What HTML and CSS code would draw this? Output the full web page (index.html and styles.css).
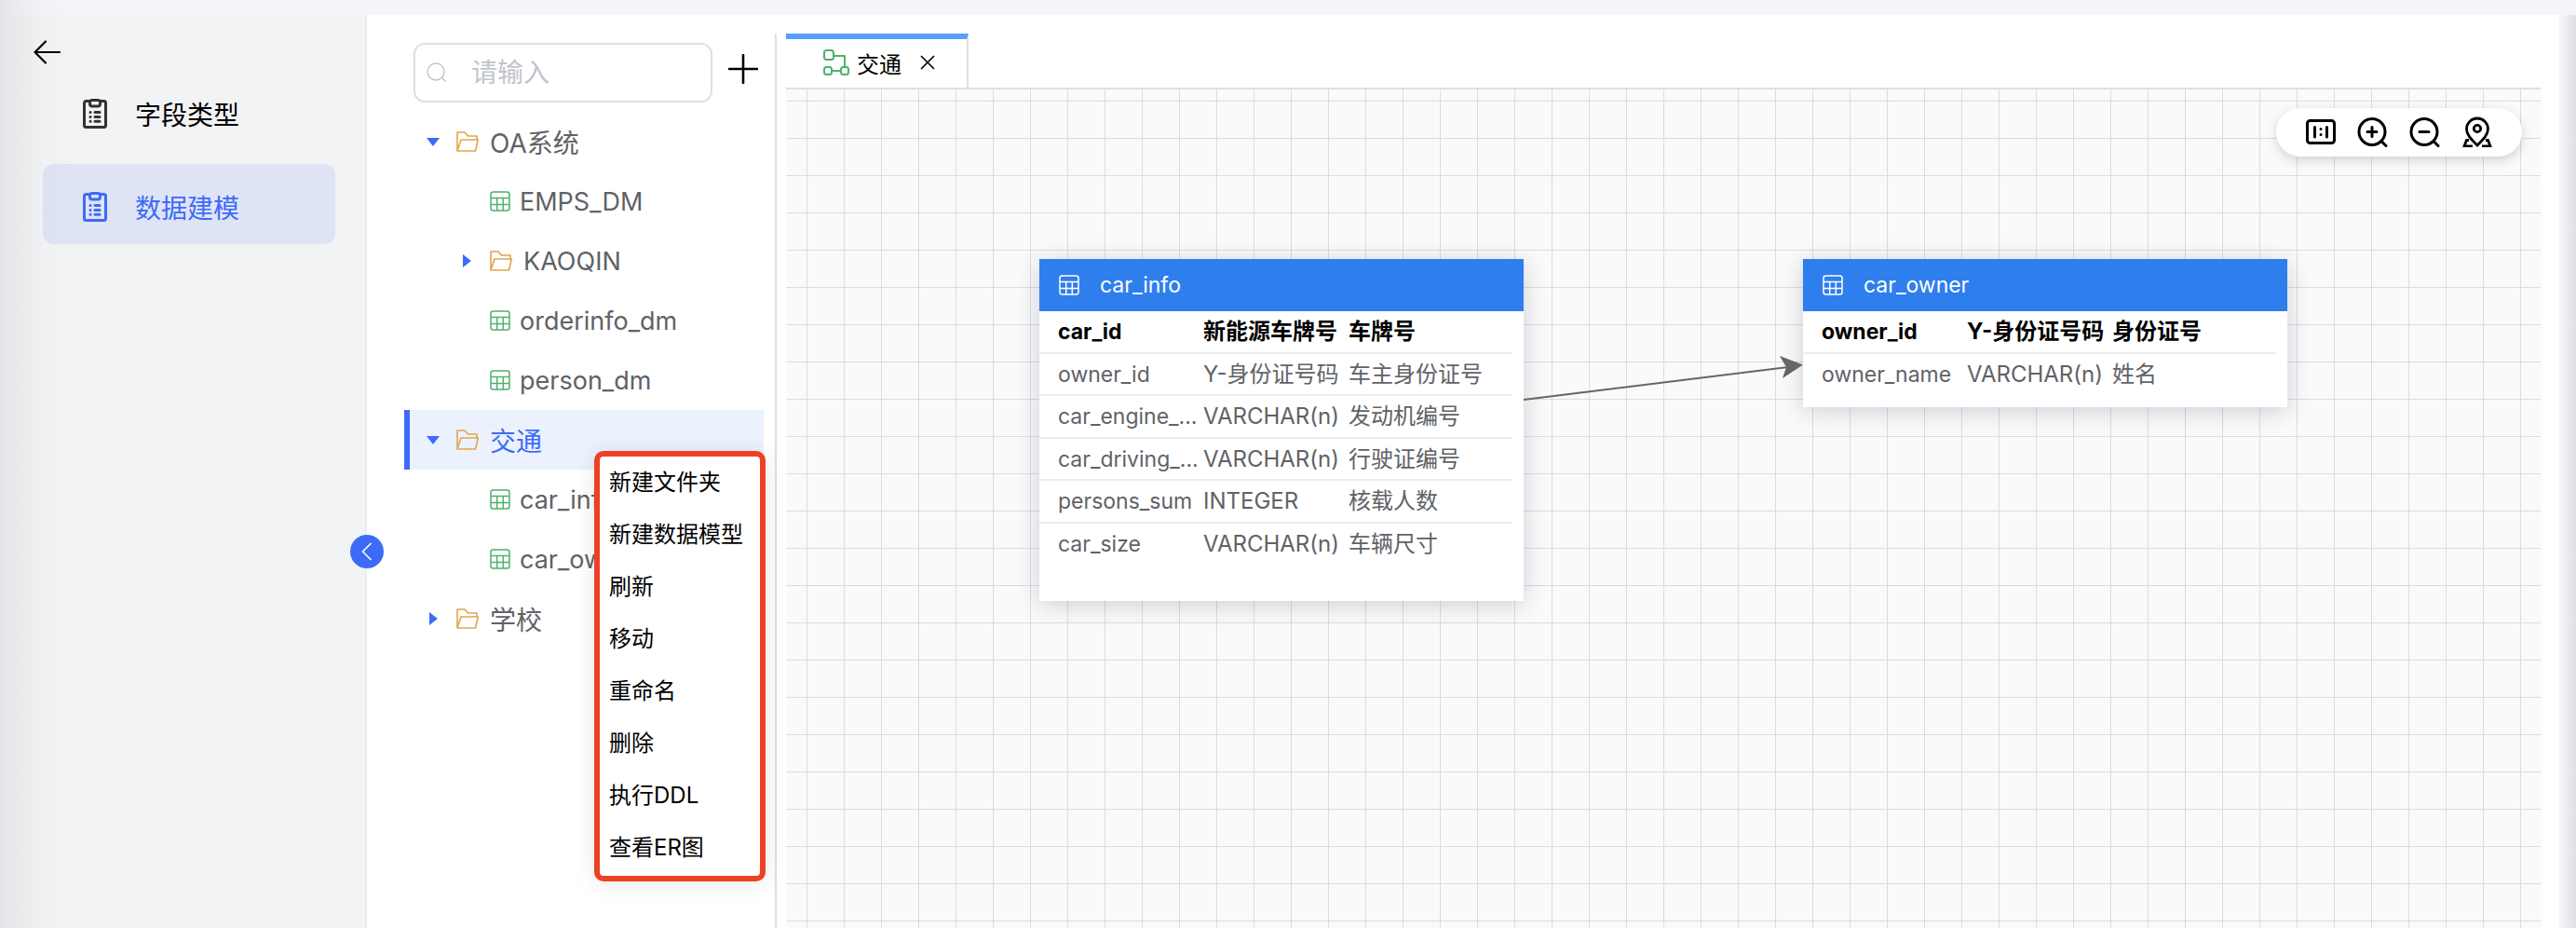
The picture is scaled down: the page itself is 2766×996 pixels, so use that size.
FILE: index.html
```html
<!DOCTYPE html>
<html lang="zh-CN">
<head>
<meta charset="utf-8">
<meta name="viewport" content="width=device-width, initial-scale=1">
<title>数据建模</title>
<link rel="stylesheet" href="styles.css">
</head>
<body>
<svg class="sprite" aria-hidden="true">
  <symbol id="i-clipboard" viewBox="0 0 26 32">
    <path d="M7 2.500H3.500a2 2 0 0 0-2 2V28.500a2 2 0 0 0 2 2h19a2 2 0 0 0 2-2V4.500a2 2 0 0 0-2-2H19" fill="none" stroke="currentColor" stroke-width="3"/>
    <rect x="7.500" y="1.500" width="11" height="6.500" rx="2.500" fill="none" stroke="currentColor" stroke-width="3"/>
    <path d="M8 14.500h.1M8 19.500h.1M8 24.300h.1M13 14.500h5M13 19.500h5M13 24.300h5" fill="none" stroke="currentColor" stroke-width="3" stroke-linecap="round"/>
  </symbol>
  <symbol id="i-folder" viewBox="0 0 24 22">
    <path d="M1 21V1h8l3.500 4H22v4M1 21L5 9h18.300L20.500 21z" fill="none" stroke="currentColor" stroke-width="1.600" stroke-linejoin="round"/>
  </symbol>
  <symbol id="i-table" viewBox="0 0 22 22">
    <rect x="1" y="1" width="20" height="20" rx="2.500" fill="none" stroke="currentColor" stroke-width="1.500"/>
    <path d="M1 7.500h20M1 14.500h20M7.700 7.500V21M14.300 7.500V21" fill="none" stroke="currentColor" stroke-width="1.500"/>
  </symbol>
</svg>

<div class="app">
  <aside class="sidebar">
    <button class="back" type="button" aria-label="返回">
      <svg width="30" height="26" viewBox="0 0 30 26"><path d="M28 13H2M13 1.500L1.500 13l11.500 11.500" fill="none" stroke="currentColor" stroke-width="2.200" stroke-linecap="round" stroke-linejoin="round"/></svg>
    </button>
    <nav class="side-nav">
      <a class="side-link" href="#types"><svg class="side-icon"><use href="#i-clipboard"/></svg><span>字段类型</span></a>
      <a class="side-link side-link-active" href="#model" aria-current="page"><svg class="side-icon"><use href="#i-clipboard"/></svg><span>数据建模</span></a>
    </nav>
    <button class="collapse" type="button" aria-label="收起">
      <svg width="12" height="20" viewBox="0 0 12 20"><path d="M10.500 1L1.500 10l9 9" fill="none" stroke="currentColor" stroke-width="1.600"/></svg>
    </button>
  </aside>

  <section class="explorer">
    <div class="search-row">
      <label class="search">
        <svg width="22" height="22" viewBox="0 0 22 22" aria-hidden="true"><circle cx="10" cy="10" r="9" fill="none" stroke="currentColor" stroke-width="1.400"/><path d="M16.500 16.500L20.500 20.500" stroke="currentColor" stroke-width="1.400"/></svg>
        <input class="search-input" type="text" placeholder="请输入" aria-label="搜索">
      </label>
      <button class="add" type="button" aria-label="新增">
        <svg width="32" height="32" viewBox="0 0 32 32"><path d="M16 1v30M1 16h30" stroke="currentColor" stroke-width="2.600" stroke-linecap="round"/></svg>
      </button>
    </div>
    <div class="tree">
      <button class="node" type="button"><span class="caret caret-open"></span><svg class="folder"><use href="#i-folder"/></svg><span>OA系统</span></button>
      <button class="node leaf" type="button"><svg class="sheet"><use href="#i-table"/></svg><span>EMPS_DM</span></button>
      <button class="node sub" type="button"><span class="caret"></span><svg class="folder"><use href="#i-folder"/></svg><span>KAOQIN</span></button>
      <button class="node leaf" type="button"><svg class="sheet"><use href="#i-table"/></svg><span>orderinfo_dm</span></button>
      <button class="node leaf" type="button"><svg class="sheet"><use href="#i-table"/></svg><span>person_dm</span></button>
      <button class="node node-active" type="button"><span class="caret caret-open"></span><svg class="folder"><use href="#i-folder"/></svg><span>交通</span></button>
      <button class="node leaf" type="button"><svg class="sheet"><use href="#i-table"/></svg><span>car_info</span></button>
      <button class="node leaf" type="button"><svg class="sheet"><use href="#i-table"/></svg><span>car_owner</span></button>
      <button class="node" type="button"><span class="caret"></span><svg class="folder"><use href="#i-folder"/></svg><span>学校</span></button>
    </div>
    <div class="menu" role="menu">
      <button class="menu-item" type="button" role="menuitem">新建文件夹</button>
      <button class="menu-item" type="button" role="menuitem">新建数据模型</button>
      <button class="menu-item" type="button" role="menuitem">刷新</button>
      <button class="menu-item" type="button" role="menuitem">移动</button>
      <button class="menu-item" type="button" role="menuitem">重命名</button>
      <button class="menu-item" type="button" role="menuitem">删除</button>
      <button class="menu-item" type="button" role="menuitem">执行DDL</button>
      <button class="menu-item" type="button" role="menuitem">查看ER图</button>
    </div>
  </section>

  <main class="workspace">
    <div class="tabs">
      <div class="tab">
        <svg width="28" height="28" viewBox="0 0 28 28" aria-hidden="true"><g fill="none" stroke="#4fb06d" stroke-width="2"><rect x="1" y="1" width="10" height="10" rx="2.500"/><rect x="1" y="19" width="8" height="8" rx="2.500"/><rect x="19" y="19" width="8" height="8" rx="2.500"/><path d="M11 7h12v12M9 23h10"/></g></svg>
        <span class="tab-name">交通</span>
        <button class="tab-close" type="button" aria-label="关闭"><svg width="16" height="16" viewBox="0 0 16 16"><path d="M1 1l14 14M15 1L1 15" stroke="currentColor" stroke-width="1.600"/></svg></button>
      </div>
    </div>
    <div class="canvas">
      <div class="tools">
        <button class="tool" type="button" aria-label="原始比例"><svg width="34" height="34" viewBox="0 0 34 34"><rect x="2.500" y="5.500" width="29" height="24" rx="3" fill="none" stroke="currentColor" stroke-width="3"/><path d="M10.500 12.500v10.500M23.500 12.500v10.500M17 14.500v.1M17 20.500v.1" stroke="currentColor" stroke-width="3" stroke-linecap="round"/></svg></button>
        <button class="tool" type="button" aria-label="放大"><svg width="34" height="34" viewBox="0 0 34 34"><g fill="none" stroke="currentColor" stroke-width="3" stroke-linecap="round"><circle cx="16" cy="17.500" r="14"/><path d="M26 27.500l5 5M16 12.500v10M11 17.500h10"/></g></svg></button>
        <button class="tool" type="button" aria-label="缩小"><svg width="34" height="34" viewBox="0 0 34 34"><g fill="none" stroke="currentColor" stroke-width="3" stroke-linecap="round"><circle cx="16" cy="17.500" r="14"/><path d="M26 27.500l5 5M11 17.500h10"/></g></svg></button>
        <button class="tool" type="button" aria-label="定位"><svg width="34" height="34" viewBox="0 0 34 34"><g fill="none" stroke="currentColor" stroke-width="2.800"><path d="M17 32C10 25 5.500 20.500 5.500 14.500a11.500 11.500 0 0 1 23 0C28.500 20.500 24 25 17 32z"/><circle cx="17" cy="14" r="3.700"/><path d="M8 26.500H5.500L3 33h9M26 26.500h2.500L31 33h-9"/></g></svg></button>
      </div>
      <svg class="edge" viewBox="0 0 300 60" aria-hidden="true"><path d="M0 45L284 10" stroke="#666" stroke-width="2"/><path d="M275 -2L300 7.500 278 22 282 10z" fill="#666"/></svg>
      <article class="entity entity-info">
        <h2 class="entity-head"><svg class="sheet"><use href="#i-table"/></svg><span>car_info</span></h2>
        <table class="fields">
          <tr class="key"><td>car_id</td><td>新能源车牌号</td><td>车牌号</td></tr>
          <tr><td>owner_id</td><td>Y-身份证号码</td><td>车主身份证号</td></tr>
          <tr><td>car_engine_...</td><td>VARCHAR(n)</td><td>发动机编号</td></tr>
          <tr><td>car_driving_...</td><td>VARCHAR(n)</td><td>行驶证编号</td></tr>
          <tr><td>persons_sum</td><td>INTEGER</td><td>核载人数</td></tr>
          <tr><td>car_size</td><td>VARCHAR(n)</td><td>车辆尺寸</td></tr>
        </table>
      </article>
      <article class="entity entity-owner">
        <h2 class="entity-head"><svg class="sheet"><use href="#i-table"/></svg><span>car_owner</span></h2>
        <table class="fields">
          <tr class="key"><td>owner_id</td><td>Y-身份证号码</td><td>身份证号</td></tr>
          <tr><td>owner_name</td><td>VARCHAR(n)</td><td>姓名</td></tr>
        </table>
      </article>
    </div>
  </main>
</div>
</body>
</html>
```

FILE: styles.css
```css
* { box-sizing: border-box; }

body {
  margin: 0;
  height: 100vh;
  overflow: hidden;
  background: #f5f4fb;
  color: #000;
  font-family: Inter, "Noto Sans CJK SC", sans-serif;
  font-size: 28px;
}

button, input { font: inherit; color: inherit; }

button {
  border: 0;
  padding: 0;
  background: none;
  cursor: pointer;
}

svg { display: block; flex: none; }
.sprite { position: absolute; width: 0; height: 0; }

.app {
  position: relative;
  display: flex;
  height: 100vh;
  padding: 16px 18px 0 14px;
}

/* soft shade along both window edges */
.app::before,
.app::after {
  content: "";
  position: absolute;
  z-index: 1;
  top: 0;
  bottom: 0;
  pointer-events: none;
}
.app::before {
  left: 0;
  width: 84px;
  background: linear-gradient(90deg, rgba(0, 0, 0, .07), rgba(0, 0, 0, .045) 18%, rgba(0, 0, 0, .012) 50%, rgba(0, 0, 0, 0));
}
.app::after {
  top: 16px;
  right: 0;
  width: 16px;
  background: linear-gradient(270deg, rgba(0, 0, 0, .09), rgba(0, 0, 0, 0));
}

.sidebar {
  position: relative;
  flex: none;
  width: 380px;
  padding: 24px 32px 0;
  border-right: 2px solid #ebebf0;
  background: #f1f3f5;
}
.back { display: flex; align-items: center; height: 32px; margin-left: -10px; }
.side-nav { display: grid; gap: 14px; padding-top: 4px; }
.side-link {
  display: flex;
  align-items: center;
  gap: 30px;
  height: 86px;
  padding: 6px 43px 0;
  border-radius: 12px;
  color: #000;
  text-decoration: none;
}
.side-icon { width: 26px; height: 32px; color: #333; }
.side-link-active { background: #dfe4f5; color: #3d6bf8; }
.side-link-active .side-icon { color: #3d6bf8; }
.collapse {
  position: absolute;
  z-index: 2;
  top: 558px;
  right: -20px;
  display: grid;
  place-items: center;
  width: 36px;
  height: 36px;
  border-radius: 50%;
  background: #3d6bf8;
  color: #fff;
}

.explorer {
  position: relative;
  flex: none;
  width: 440px;
  margin-top: 20px;
  padding-top: 10px;
  border-right: 2px solid #dfdfdf;
  background: #fff;
  box-shadow: 0 -20px #fff;
}
.search-row { display: flex; align-items: flex-start; gap: 17px; padding-left: 50px; }
.search {
  display: flex;
  align-items: center;
  gap: 26px;
  width: 321px;
  height: 64px;
  padding: 0 12px;
  border: 2px solid #dfdfdf;
  border-radius: 12px;
  color: #c0c4cc;
}
.search-input {
  flex: 1;
  min-width: 0;
  border: 0;
  padding: 0;
  background: none;
  color: #606266;
  outline: 0;
}
.search-input::placeholder { color: #c0c4cc; opacity: 1; }
.add { padding-top: 12px; }

.tree { display: grid; padding: 10px 12px 0 40px; }
.node {
  display: flex;
  align-items: center;
  height: 64px;
  padding-left: 16px;
  border-left: 6px solid transparent;
  color: #606266;
  text-align: left;
  white-space: nowrap;
}
.node-active { background: #ebf2fe; border-left-color: #3d6bf8; color: #3d6bf8; }
.sub { padding-left: 52px; font-size: 27px; }
.leaf { padding-left: 86px; gap: 10px; font-size: 27px; }
.caret { display: grid; width: 18px; margin-right: 16px; }
.caret::before {
  content: "";
  justify-self: center;
  border-left: 9px solid #3d6bf8;
  border-top: 7px solid transparent;
  border-bottom: 7px solid transparent;
}
.caret-open::before {
  border-top: 9px solid #3d6bf8;
  border-bottom: 0;
  border-left: 7px solid transparent;
  border-right: 7px solid transparent;
}
.folder { width: 24px; height: 22px; margin-right: 12px; color: #e2a54c; }
.sheet { width: 22px; height: 22px; color: #4fb06d; }

.menu {
  position: absolute;
  z-index: 3;
  top: 448px;
  left: 244px;
  display: grid;
  width: 184px;
  padding-bottom: 2px;
  border: 6px solid #ee4025;
  border-radius: 10px;
  background: #fff;
  box-shadow: 0 2px 24px rgba(0, 0, 0, .1);
  font-size: 24px;
}
.menu-item { height: 56px; padding: 0 0 6px 10px; text-align: left; white-space: nowrap; }

.workspace {
  flex: 1;
  min-width: 0;
  display: flex;
  flex-direction: column;
  padding: 20px 20px 0 10px;
  background: #fff;
}
.tabs { display: flex; height: 60px; border-bottom: 2px solid #dfdfdf; }
.tab {
  display: flex;
  align-items: center;
  gap: 8px;
  padding: 0 34px 2px 40px;
  border-top: 6px solid #589ef8;
  border-right: 2px solid #dfdfdf;
  font-size: 24px;
}
.tab-close { margin-left: 12px; }

.canvas {
  position: relative;
  flex: 1;
  overflow: hidden;
  background-color: #fafafa;
  background-image:
    linear-gradient(90deg, #d8dde0 1px, transparent 1px),
    linear-gradient(#d8dde0 1px, transparent 1px);
  background-size: 40px 40px;
  background-position: 22px 12px;
}
.tools {
  position: absolute;
  top: 20px;
  right: 20px;
  display: flex;
  align-items: center;
  gap: 22px;
  height: 52px;
  padding: 0 31px;
  border-radius: 26px;
  background: #fff;
  box-shadow: 0 4px 12px rgba(0, 0, 0, .16);
}
.tool { padding-bottom: 2px; }

.edge { position: absolute; top: 288px; left: 792px; width: 300px; height: 60px; overflow: visible; z-index: 1; }
.entity {
  position: absolute;
  top: 182px;
  width: 520px;
  background: #fff;
  box-shadow: 0 4px 24px rgba(30, 40, 80, .2);
  font-size: 24px;
}
.entity-info { left: 272px; padding-bottom: 38px; }
.entity-owner { left: 1092px; padding-bottom: 12px; }
.entity-head {
  display: flex;
  align-items: center;
  gap: 22px;
  height: 56px;
  margin: 0;
  padding: 0 21px;
  background: #2f7eed;
  color: #fff;
  font-size: 23px;
  font-weight: 400;
}
.entity-head .sheet { color: #fff; }
.fields {
  width: 508px;
  table-layout: fixed;
  border-collapse: separate;
  border-spacing: 0;
  color: #606266;
}
.fields td {
  width: 156px;
  height: 46px;
  padding: 0;
  border-bottom: 2px solid #ececec;
  line-height: 32px;
  white-space: nowrap;
}
.fields tr:nth-child(even) td { height: 45px; }
.fields tr:last-child td { border-bottom-color: transparent; }
.fields td:first-child { width: 176px; padding-left: 20px; font-size: 23px; }
.fields td:last-child { width: auto; }
.key { color: #000; font-weight: 700; }
```
